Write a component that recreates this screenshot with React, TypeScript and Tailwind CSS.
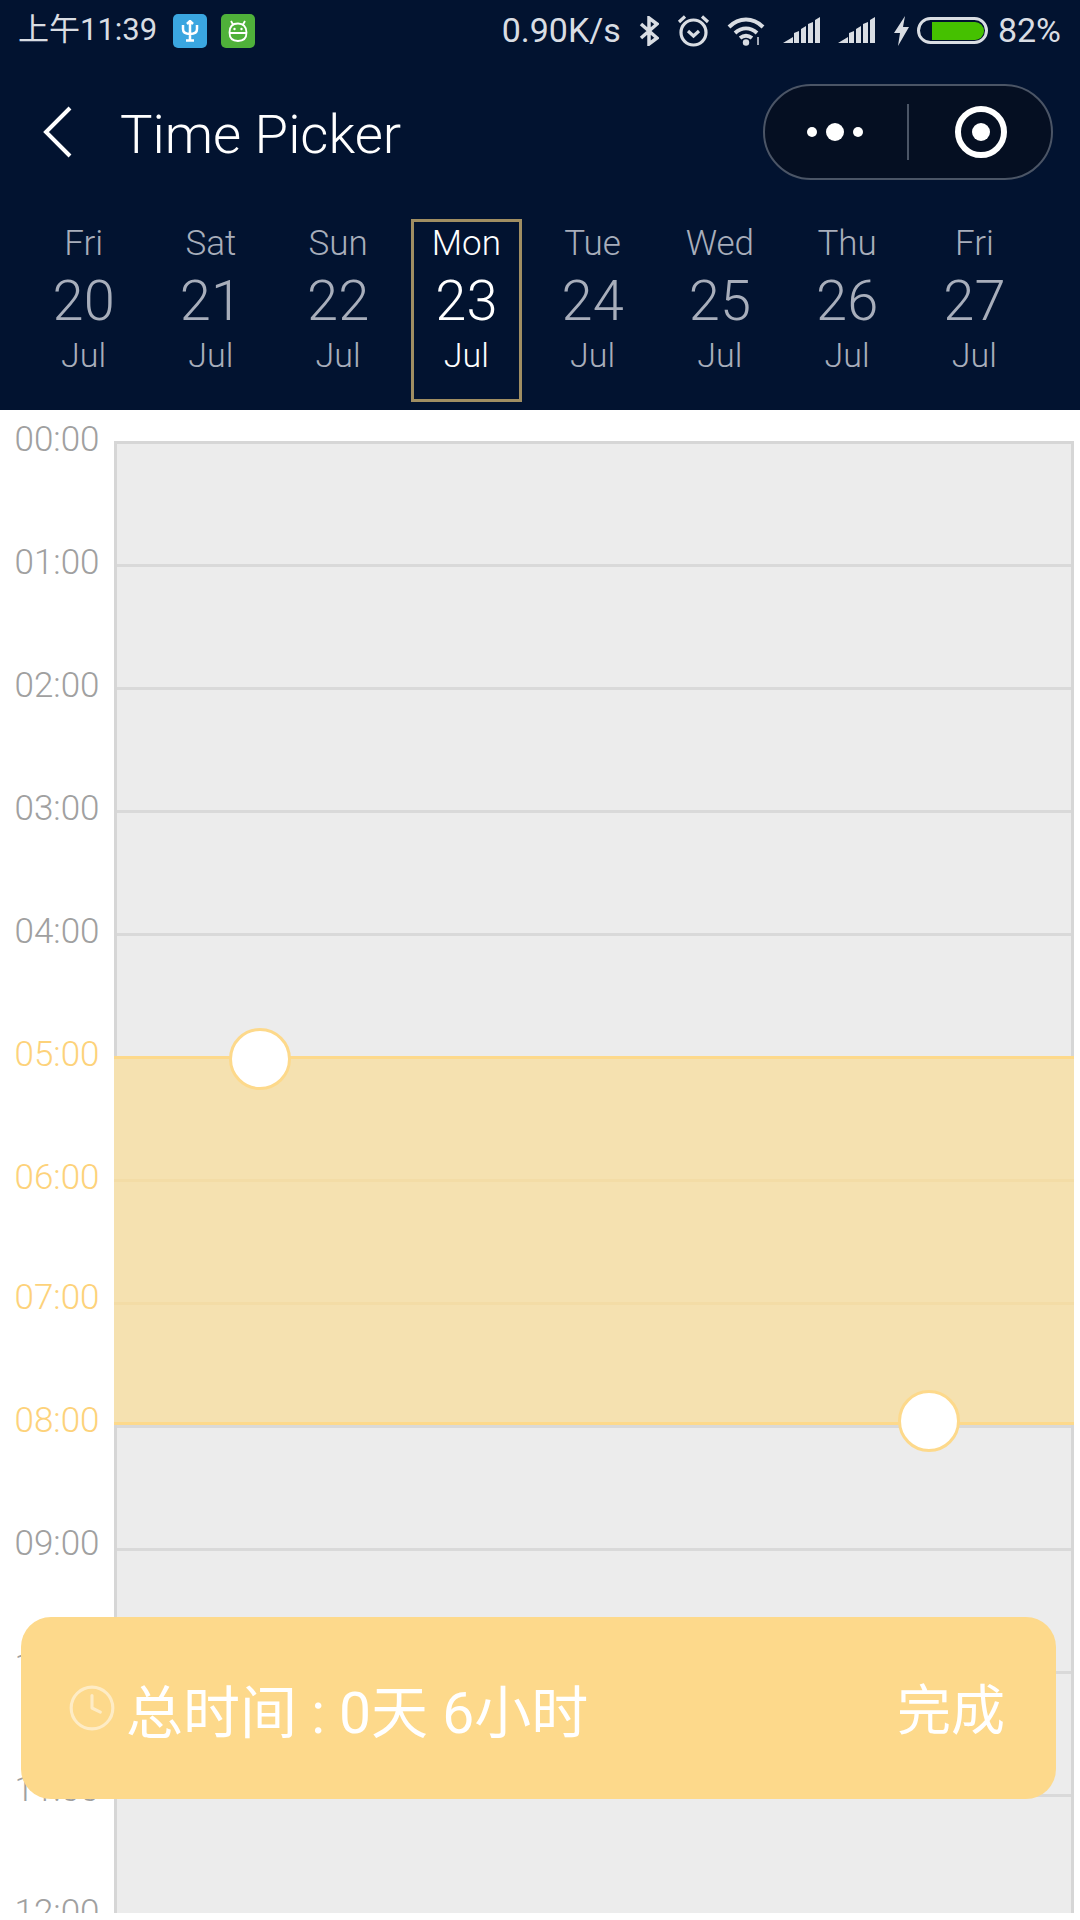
import { Clock } from 'lucide-react'

const SANS = "font-['Roboto','Noto_Sans_CJK_SC',sans-serif] font-light"

const days = [
  { week: 'Fri', day: '20' },
  { week: 'Sat', day: '21' },
  { week: 'Sun', day: '22' },
  { week: 'Mon', day: '23', active: true },
  { week: 'Tue', day: '24' },
  { week: 'Wed', day: '25' },
  { week: 'Thu', day: '26' },
  { week: 'Fri', day: '27' },
]

const hours = ['00:00', '01:00', '02:00', '03:00', '04:00', '05:00', '06:00', '07:00', '08:00', '09:00', '10:00', '11:00', '12:00']

function Signal({ className }: { className?: string }) {
  return (
    <svg className={className} width="37" height="27" viewBox="0 0 37 27" fill="#d9dde3">
      <path d="M0 26l10-6v6zM11 16l5-2v12h-5zM18 12l5-3v17h-5zM25 7l5-2v21h-5zM32 3l5-3v26h-5z" />
    </svg>
  )
}

function StatusBar() {
  return (
    <div className="flex h-[61px] items-center justify-between pl-[18px] pr-[19px] font-normal text-[#d9dde3]">
      <div className="flex items-center">
        <span className="text-[31px]">上午11:39</span>
        <div className="ml-[16px] flex h-[34px] w-[34px] items-center justify-center rounded-[5px] bg-[#3aa6e0]">
          <svg width="18" height="22" viewBox="0 0 18 22" fill="none" stroke="white" strokeWidth="2.500">
            <path d="M9 2v19M2 5v4c0 4 3 5 7 5s7-1 7-5V5" />
            <path d="M5 20.500h8M6 4l3-3 3 3" />
          </svg>
        </div>
        <div className="ml-[14px] flex h-[34px] w-[34px] items-center justify-center rounded-[5px] bg-[#4fb13a]">
          <svg width="20" height="22" viewBox="0 0 20 22" fill="none" stroke="white" strokeWidth="1.800">
            <path d="M3 1l2 3.500M17 1l-2 3.500M10 3.500c-5 0-8.500 3-8.500 9S5 21 10 21s8.500-2.500 8.500-8.500-3.500-9-8.500-9zM2 13h16" />
            <circle cx="6.500" cy="9" r="1.200" fill="white" stroke="none" />
            <circle cx="13.500" cy="9" r="1.200" fill="white" stroke="none" />
          </svg>
        </div>
      </div>
      <div className="flex items-center">
        <span className="text-[34px]">0.90K/s</span>
        <svg className="ml-[18px]" width="20" height="30" viewBox="0 0 20 30" fill="none" stroke="#d9dde3" strokeWidth="3.500">
          <path d="M2 8l16 14-8 6V2l8 6L2 22" />
        </svg>
        <svg className="ml-[18px]" width="33" height="33" viewBox="0 0 33 33" fill="none" stroke="#d9dde3" strokeWidth="3.200">
          <circle cx="16.500" cy="18.500" r="12.500" />
          <path d="M2 8l6-5.500M31 8l-6-5.500M11 17l5.500 5 5.500-5" />
        </svg>
        <svg className="ml-[17px]" width="38" height="30" viewBox="0 0 38 30" fill="none" stroke="#d9dde3" strokeWidth="4">
          <path d="M2 11c10-10 24-10 34 0M8 17c7-6 15-6 22 0M13 22c4-3 8-3 12 0" />
          <circle cx="19" cy="26.500" r="3.200" fill="#d9dde3" stroke="none" />
          <path d="M31 21v8" strokeWidth="1.500" />
        </svg>
        <Signal className="ml-[18px]" />
        <Signal className="ml-[18px]" />
        <svg className="ml-[18px]" width="17" height="30" viewBox="0 0 17 30" fill="#d9dde3">
          <path d="M12 0L1 17h6L5 30l11-19h-6z" />
        </svg>
        <div className="ml-[7px] flex h-[27px] w-[71px] items-center rounded-[14px] border-[3px] border-[#d9dde3] pl-[12px] pr-[1px]">
          <div className="h-[18px] flex-1 rounded-r-[9px] bg-[#45c100]" />
        </div>
        <span className="ml-[10px] text-[34px]">82%</span>
      </div>
    </div>
  )
}

function NavBar() {
  return (
    <div className="flex h-[142px] items-center justify-between pl-[42px] pr-[27px]">
      <div className="flex items-center">
        <svg width="30" height="52" viewBox="0 0 30 52" fill="none" stroke="white" strokeWidth="4">
          <path d="M28 2L4 26l24 24" />
        </svg>
        <span className="ml-[48px] pt-[5px] text-[54.500px] text-white">Time Picker</span>
      </div>
      <div className="flex h-[96px] w-[290px] items-center rounded-full border-2 border-[#4b5566] bg-[#050f22]">
        <div className="flex w-[142px] items-center justify-center gap-[9px] pr-[3px]">
          <span className="h-[10px] w-[10px] rounded-full bg-white" />
          <span className="h-[18px] w-[18px] rounded-full bg-white" />
          <span className="h-[10px] w-[10px] rounded-full bg-white" />
        </div>
        <div className="h-[56px] w-[2px] bg-[#4b5566]" />
        <div className="flex flex-1 items-center justify-center pl-[2px]">
          <div className="flex h-[52px] w-[52px] items-center justify-center rounded-full border-[6px] border-white">
            <span className="h-[18px] w-[18px] rounded-full bg-white" />
          </div>
        </div>
      </div>
    </div>
  )
}

function DateStrip() {
  return (
    <div className="flex h-[207px] px-[20px] pt-[16px]">
      {days.map((d, i) => (
        <div key={i} className="flex w-[127.250px] justify-center">
          <div
            className={`flex h-[183px] w-[111px] flex-col items-center border-[3px] ${
              d.active ? 'translate-x-[1px] border-[#a08e62] text-white' : 'border-transparent text-[#a8aebb]'
            }`}
          >
            <span className="pt-[1px] text-[35px] leading-[42px]">{d.week}</span>
            <span className="mt-[3px] text-[56px] leading-[66px]">{d.day}</span>
            <span className="text-[34px] leading-[42px]">Jul</span>
          </div>
        </div>
      ))}
    </div>
  )
}

function Timeline() {
  return (
    <div className="relative h-[1503px] overflow-hidden bg-white pt-[31px]">
      <div className="ml-[114px] mr-[6px] h-[1472px] border-x-[3px] border-t-[3px] border-[#d6d6d6] bg-[#ececec]">
        {hours.slice(0, 12).map((h, i) => (
          <div key={h} className={i > 0 ? 'h-[123px] border-t-[3px] border-[#d9d9d9]' : 'h-[120px]'} />
        ))}
      </div>
      <div className="absolute left-0 top-[6px] w-[114px]">
        {hours.map((h, i) => (
          <div
            key={h}
            className={`flex h-[123px] justify-center text-[35px] leading-[48px] ${
              i >= 5 && i <= 8 ? 'text-[#fdd27a]' : 'text-[#a0a0a0]'
            } ${i === 7 ? '-mt-[3px]' : ''}`}
          >
            {h}
          </div>
        ))}
      </div>
      {/* selected range */}
      <div className="absolute left-[114px] right-[6px] top-[646px] h-[369px] border-y-[3px] border-[#fdd98b] bg-[#f5e1b0]">
        <div className="mt-[120px] h-[3px] bg-[#f3dca6]" />
        <div className="mt-[120px] h-[3px] bg-[#f3dca6]" />
      </div>
      <div className="absolute left-[229px] top-[618px] h-[62px] w-[62px] rounded-full border-[3px] border-[#fdd98b] bg-white" />
      <div className="absolute left-[898px] top-[980px] h-[62px] w-[62px] rounded-full border-[3px] border-[#fdd98b] bg-white" />
      {/* summary bar */}
      <div className="absolute left-[21px] top-[1207px] flex h-[182px] w-[1035px] items-center justify-between rounded-[30px] bg-[#fdd98b] pl-[46px] pr-[51px] font-normal text-white">
        <div className="flex items-center">
          <Clock size={50} strokeWidth={1.500} className="text-white/50" />
          <span className="ml-[9px] pt-[11px] text-[57px]">总时间 : 0天 6小时</span>
        </div>
        <span className="pt-[6px] text-[54px]">完成</span>
      </div>
    </div>
  )
}

export default function App() {
  return (
    <div className={`h-[1920px] w-[1080px] overflow-hidden bg-white ${SANS}`}>
      <div className="bg-[#021330]">
        <StatusBar />
        <NavBar />
        <DateStrip />
      </div>
      <Timeline />
    </div>
  )
}
